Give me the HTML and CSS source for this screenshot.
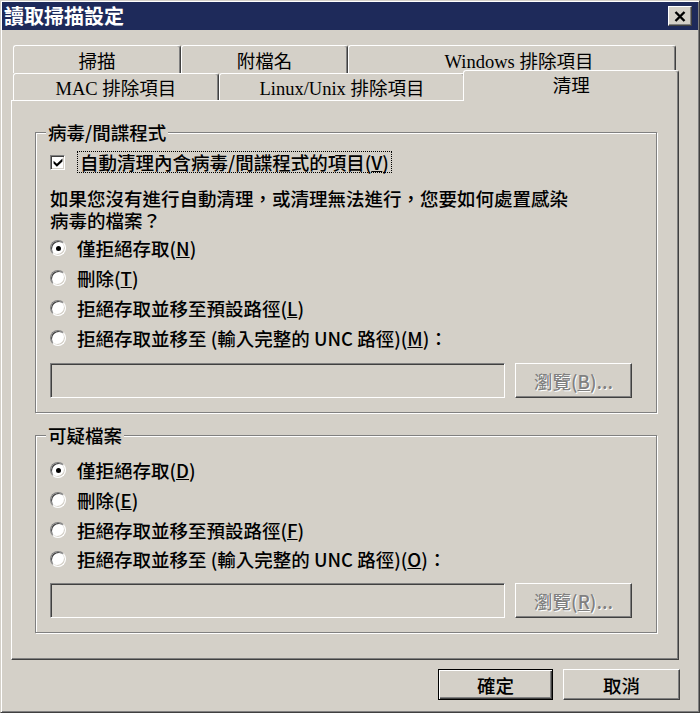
FILE: index.html
```html
<!DOCTYPE html>
<html lang="zh-Hant">
<head>
    <meta charset="UTF-8">
    <title>讀取掃描設定</title>
    <link rel="stylesheet" href="styles.css">
</head>
<body>

    <div class="dialog">
        <div class="titleBar">
            <span class="titleText">讀取掃描設定</span>
            <button class="closeBtn">
                <svg width="12" height="11" viewBox="0 0 12 11">
                    <path d="M1.5 1 L10.5 10 M10.5 1 L1.5 10" stroke="#000" stroke-width="2.4" fill="none"/>
                </svg>
            </button>
        </div>

        <div class="dialogBody">
            <div class="tabStrip">
                <div class="tabRow backRow">
                    <div class="tab tabScan">掃描</div>
                    <div class="tab tabExt">附檔名</div>
                    <div class="tab tabWin">Windows 排除項目</div>
                </div>
                <div class="tabRow frontRow">
                    <div class="tab tabMac">MAC 排除項目</div>
                    <div class="tab tabLinux">Linux/Unix 排除項目</div>
                    <div class="tab tabActive">清理</div>
                </div>
            </div>

            <div class="tabPanel">
                <fieldset class="group">
                    <legend>病毒/間諜程式</legend>
                    <div class="checkRow">
                        <span class="checkbox">
                            <svg width="10" height="9" viewBox="0 0 9 8">
                                <path d="M0.5 2.5 L3.5 5.2 L8.5 0.5 L8.5 3 L3.5 7.8 L0.5 5 Z" fill="#000"/>
                            </svg>
                        </span>
                        <span class="focusLabel">自動清理內含病毒/間諜程式的項目(<u>V</u>)</span>
                    </div>
                    <p class="question">如果您沒有進行自動清理，或清理無法進行，您要如何處置感染<br>病毒的檔案？</p>
                    <div class="radioRow"><span class="radio checked"></span><span>僅拒絕存取(<u>N</u>)</span></div>
                    <div class="radioRow"><span class="radio"></span><span>刪除(<u>T</u>)</span></div>
                    <div class="radioRow"><span class="radio"></span><span>拒絕存取並移至預設路徑(<u>L</u>)</span></div>
                    <div class="radioRow"><span class="radio"></span><span>拒絕存取並移至 (輸入完整的 UNC 路徑)(<u>M</u>)：</span></div>
                    <div class="pathRow">
                        <div class="pathInput"></div>
                        <button class="btn btnDisabled">瀏覽(<u>B</u>)...</button>
                    </div>
                </fieldset>

                <fieldset class="group groupSuspect">
                    <legend>可疑檔案</legend>
                    <div class="radioRow firstRadio"><span class="radio checked"></span><span>僅拒絕存取(<u>D</u>)</span></div>
                    <div class="radioRow"><span class="radio"></span><span>刪除(<u>E</u>)</span></div>
                    <div class="radioRow"><span class="radio"></span><span>拒絕存取並移至預設路徑(<u>F</u>)</span></div>
                    <div class="radioRow lastRadio"><span class="radio"></span><span>拒絕存取並移至 (輸入完整的 UNC 路徑)(<u>O</u>)：</span></div>
                    <div class="pathRow">
                        <div class="pathInput"></div>
                        <button class="btn btnDisabled">瀏覽(<u>R</u>)...</button>
                    </div>
                </fieldset>
            </div>

            <div class="dialogButtons">
                <button class="btn btnDefault btnOk">確定</button>
                <button class="btn btnCancel">取消</button>
            </div>
        </div>
    </div>

</body>
</html>
```

FILE: styles.css
```css
* {
    box-sizing: border-box;
}

html, body {
    margin: 0;
    padding: 0;
}

body {
    background: #d4d0c8;
    font-family: "Noto Sans CJK TC", "Noto Sans", sans-serif;
    font-size: 18.5px;
    font-weight: 500;
    color: #000;
}

.dialog {
    width: 700px;
    height: 713px;
    background: #d4d0c8;
    border: 1px solid;
    border-color: #d4d0c8 #404040 #404040 #d4d0c8;
    box-shadow: inset 1px 1px #fff, inset -1px -1px #808080;
    padding: 1px;
}

/* title bar */
.titleBar {
    height: 28px;
    background: #1e2a5a;
    display: flex;
    align-items: center;
    justify-content: space-between;
    padding: 0 6px 0 2px;
}

.titleText {
    color: #fff;
    font-weight: bold;
    font-size: 20px;
    line-height: 28px;
}

.closeBtn {
    width: 24px;
    height: 20px;
    padding: 0;
    background: #d4d0c8;
    border: 1px solid;
    border-color: #fff #404040 #404040 #fff;
    box-shadow: inset -1px -1px #808080;
    display: flex;
    align-items: center;
    justify-content: center;
}

.dialogBody {
    padding: 15px 19px 0 9px;
}

/* tabs */
.tabRow {
    display: flex;
    padding-left: 2px;
}

.backRow {
    height: 28px;
}

.frontRow {
    height: 27px;
}

.tab {
    height: 100%;
    border: 1px solid;
    border-bottom: none;
    border-color: #fff #404040 transparent #fff;
    border-radius: 3px 3px 0 0;
    box-shadow: inset -1px 0 #808080;
    display: flex;
    align-items: center;
    justify-content: center;
    font-family: "Liberation Serif", "Noto Sans CJK TC", serif;
    font-weight: normal;
    white-space: nowrap;
}

.tabScan { width: 168px; }
.tabExt { width: 167px; }
.tabWin { width: 328px; padding-left: 14px; }
.tabMac { width: 206px; }
.tabLinux { width: 247px; }

.tabActive {
    width: 216px;
    height: 31px;
    margin: -3px 0 0 -2px;
    padding-bottom: 4px;
    background: #d4d0c8;
    position: relative;
    z-index: 1;
}

.tabPanel {
    height: 560px;
    border: 1px solid;
    border-color: #fff #404040 #404040 #fff;
    box-shadow: inset -1px -1px #808080;
    padding: 20px 21px 0 23px;
}

/* group boxes */
.group {
    margin: 0;
    padding: 0 24px 14px 14px;
    border: 1px solid #808080;
    box-shadow: inset 1px 1px #fff, 1px 1px #fff;
    min-width: 0;
}

.groupSuspect {
    margin-top: 11px;
}

.group legend {
    padding: 0 2px;
    margin-left: -4px;
    line-height: 22px;
    background: #d4d0c8;
}

.checkRow {
    height: 22px;
    margin-top: 8px;
    display: flex;
    align-items: center;
}

.checkbox {
    width: 15px;
    height: 15px;
    margin-right: 12px;
    background: #fff;
    border: 1px solid;
    border-color: #808080 #fff #fff #808080;
    box-shadow: inset 1px 1px #404040, inset -1px -1px #d4d0c8;
    display: flex;
    align-items: center;
    justify-content: center;
}

.focusLabel {
    border: 1px dotted #000;
    padding: 0 2px;
    line-height: 20px;
}

.question {
    margin: 14px 0 2px;
    line-height: 22px;
}

.radioRow {
    height: 30px;
    display: flex;
    align-items: center;
    white-space: nowrap;
}

.firstRadio {
    margin-top: 9px;
}

.lastRadio {
    height: 27px;
}

.radio {
    width: 16px;
    height: 16px;
    margin-right: 11px;
    border-radius: 50%;
    background: #fff;
    border: 1px solid;
    border-color: #808080 #fff #fff #808080;
    box-shadow: inset 1px 1px #404040, inset -1px -1px #d4d0c8;
    display: flex;
    align-items: center;
    justify-content: center;
}

.radio.checked::after {
    content: "";
    width: 5px;
    height: 5px;
    border-radius: 50%;
    background: #000;
}

.pathRow {
    display: flex;
    gap: 10px;
    margin-top: 10px;
    height: 35px;
}

.lastRadio + .pathRow {
    margin-top: 11px;
}

.pathInput {
    flex: 1;
    background: #d4d0c8;
    border: 1px solid;
    border-color: #808080 #fff #fff #808080;
    box-shadow: inset 1px 1px #404040, inset -1px -1px #d4d0c8;
}

/* buttons */
.btn {
    font: inherit;
    color: #000;
    padding: 0;
    background: #d4d0c8;
    border: 1px solid;
    border-color: #fff #404040 #404040 #fff;
    box-shadow: inset -1px -1px #808080;
}

.btnDisabled {
    width: 117px;
    color: #808080;
    text-shadow: 1px 1px #fff;
}

.btnDefault {
    border-color: #000;
    box-shadow: inset 1px 1px #fff, inset -1px -1px #404040, inset -2px -2px #808080;
}

.dialogButtons {
    display: flex;
    justify-content: flex-end;
    gap: 10px;
    margin-top: 9px;
    margin-right: -1px;
}

.btnOk {
    width: 115px;
    height: 31px;
}

.btnCancel {
    width: 117px;
    height: 31px;
}
```
